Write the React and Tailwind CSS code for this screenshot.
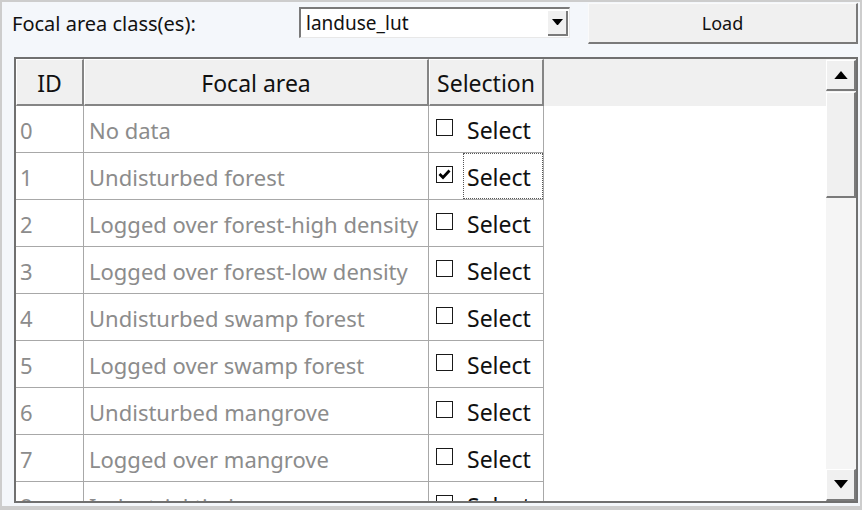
import React from "react";

const rows = [
  ["0", "No data", false],
  ["1", "Undisturbed forest", true],
  ["2", "Logged over forest-high density", false],
  ["3", "Logged over forest-low density", false],
  ["4", "Undisturbed swamp forest", false],
  ["5", "Logged over swamp forest", false],
  ["6", "Undisturbed mangrove", false],
  ["7", "Logged over mangrove", false],
  ["8", "Industrial timber", false],
];

function Box({ checked }) {
  return (
    <div className="w-[17px] h-[17px] border-[1.5px] border-[#1a1a1a] bg-white flex items-center justify-center shrink-0 mb-[4px]">
      {checked && (
        <svg width="13" height="13" viewBox="0 0 13 13">
          <path d="M1.5 6 L5 9.5 L11.5 2.5" fill="none" stroke="#000" strokeWidth="2.8" />
        </svg>
      )}
    </div>
  );
}

function Arrow({ up, size = 12 }) {
  return (
    <svg width={size} height={size * 0.6} viewBox="0 0 10 6">
      <path d={up ? "M0 6 L5 0 L10 6 Z" : "M0 0 L10 0 L5 6 Z"} fill="#000" />
    </svg>
  );
}

export default function App() {
  return (
    <div
      className="w-[862px] h-[510px] bg-[#cdcdcd] pt-[2px] pl-[2px] pr-[2px] pb-[4px] overflow-hidden"
      style={{ fontFamily: '"Noto Sans", "Open Sans", sans-serif' }}
    >
      <div className="w-full h-full bg-[#f4f7fb] flex flex-col">
        <div className="flex items-start h-[55px] shrink-0">
          <div className="w-[297px] pl-[10px] pt-[10px] text-[20px] leading-[24px] text-[#111]">
            Focal area class(es):
          </div>
          <div className="mt-[5px] w-[271px] h-[31px] bg-white border-t-2 border-l-2 border-[#7a7a7a] border-r border-b border-r-[#e8e8e8] border-b-[#e8e8e8] flex items-center">
            <div className="flex-1 pl-[5px] text-[19px] leading-[24px] text-[#111]">landuse_lut</div>
            <div className="w-[20px] h-[25px] mr-[1px] bg-[#f0f0f0] border-r-2 border-b-2 border-[#7a7a7a] flex items-center justify-center">
              <Arrow size={11} />
            </div>
          </div>
          <div className="ml-[18px] mt-[1px] w-[270px] h-[41px] bg-[#f0f0f0] border-t border-l border-[#fafafa] border-r-2 border-b-2 border-r-[#7a7a7a] border-b-[#7a7a7a] flex items-center justify-center text-[18px] text-[#111]">
            Load
          </div>
        </div>
        <div className="ml-[12px] w-[844px] h-[446px] border-2 border-[#707070] flex bg-white overflow-hidden">
          <div className="w-[810px] flex flex-col">
            <div className="flex h-[47px] shrink-0 bg-[#f0f0f0] text-[23px] text-[#111]">
              <div className="w-[68px] border-r-2 border-b-2 border-[#858585] border-l border-t border-l-white border-t-white flex items-center justify-center pt-[3px]">ID</div>
              <div className="w-[345px] border-r-2 border-b-2 border-[#858585] border-l border-t border-l-white border-t-white flex items-center justify-center pt-[3px]">Focal area</div>
              <div className="w-[115px] border-r-2 border-b-2 border-[#858585] border-l border-t border-l-white border-t-white flex items-center justify-center pt-[3px]">Selection</div>
              <div className="flex-1" />
            </div>
            {rows.map(([id, name, checked]) => (
              <div key={id} className="flex h-[47px] shrink-0 text-[22px]">
                <div className="w-[68px] border-r border-b border-[#a8a8a8] pl-[4px] pt-[3px] flex items-center text-[#8c8c8c]">{id}</div>
                <div className="w-[345px] border-r border-b border-[#a8a8a8] pl-[5px] pt-[3px] flex items-center text-[#8c8c8c] whitespace-nowrap">{name}</div>
                <div className="w-[115px] border-r border-b border-[#a8a8a8] pl-[7px] flex items-center gap-[10px] text-[#111]">
                  <Box checked={checked} />
                  <div
                    className={
                      "h-full flex-1 flex items-center pl-[4px] pt-[3px] text-[23px] " +
                      (checked ? "outline-1 outline-dotted outline-[#555] -outline-offset-1" : "")
                    }
                  >
                    Select
                  </div>
                </div>
              </div>
            ))}
          </div>
          <div className="w-[30px] flex flex-col bg-[#f4f4f4] pt-[1px]">
            <div className="h-[31px] bg-[#f0f0f0] border-t border-l border-white border-r-2 border-b-2 border-r-[#7a7a7a] border-b-[#7a7a7a] flex items-center justify-center">
              <Arrow up size={14} />
            </div>
            <div className="h-[106px] mt-[1px] bg-[#f0f0f0] border-t border-l border-white border-r-2 border-b-2 border-r-[#7a7a7a] border-b-[#7a7a7a]" />
            <div className="flex-1 bg-[#f5f5f5]" />
            <div className="h-[32px] bg-[#f0f0f0] border-t border-l border-white border-r-2 border-b-2 border-r-[#7a7a7a] border-b-[#7a7a7a] flex items-center justify-center">
              <Arrow size={14} />
            </div>
          </div>
        </div>
      </div>
    </div>
  );
}
